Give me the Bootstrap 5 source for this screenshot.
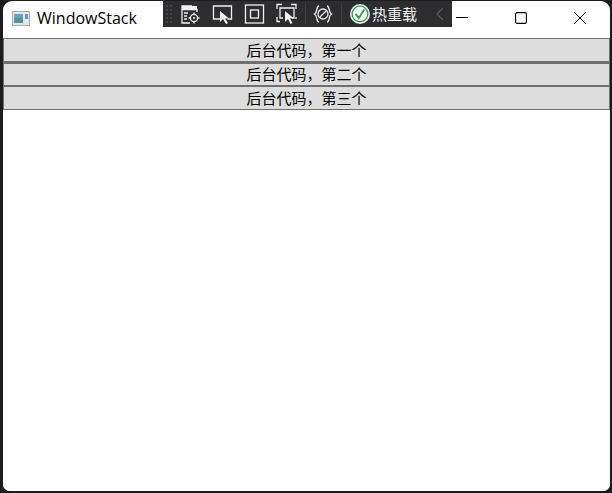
<!DOCTYPE html>
<html lang="zh">
<head>
<meta charset="utf-8">
<title>WindowStack</title>
<link href="https://cdn.jsdelivr.net/npm/bootstrap@5.3.0/dist/css/bootstrap.min.css" rel="stylesheet">
<style>
html,body{height:100%;margin:0;overflow:hidden;background:#1c1c1c}
body{padding:1px 2px 2px 3px;font-family:"Liberation Sans","Noto Sans CJK SC",sans-serif}
.win-frame{height:100%;background:#fff;border-radius:9px 9px 7px 7px;position:relative;overflow:hidden}
.win-title{height:37px;padding-left:9px}
.app-icon{width:18px;height:15px;margin-right:7px;margin-top:-2px}
.title-text{font:16px "Open Sans","Liberation Sans",sans-serif;color:#000;margin-top:-3px}
.ctrl-btn{width:59px;height:37px;margin-top:-3px}
.ctrl-row{margin-right:1px}
.dbg-bar{position:absolute;left:160px;top:0;width:289px;height:26px;background:#2d2d30;color:#f1f1f1;padding-left:2px}
.dbg-grip{width:8px;height:20px;margin-right:6px;background-image:radial-gradient(#434347 1px,transparent 1px);background-size:4px 4px}
.dbg-ic{width:22px;height:22px;flex:none}
.gap-first{margin-left:11px}
.gap-ic{margin-left:10px}
.gap-a{margin-left:6px}
.gap-b{margin-left:7px}
.dbg-sep{width:1px;height:20px;background:#3f3f46;flex:none}
.reload-text{font:15px "Noto Sans CJK SC",sans-serif;color:#f1f1f1;line-height:20px;margin-left:1px}
.stack-btn{display:block;width:100%;height:24px;padding:0 0 2px;border:1px solid #707070;border-radius:0;background:#ddd;color:#000;font:15px/19px "Noto Sans CJK SC",sans-serif;text-align:center}
.stack-btn+.stack-btn{border-top-width:2px;line-height:17px}
.stack-btn:last-child{border-top-width:1px;line-height:19px}
</style>
</head>
<body>
<div class="win-frame d-flex flex-column">
  <div class="win-title d-flex align-items-center">
    <svg class="app-icon" viewBox="0 0 18 15"><rect x=".5" y=".5" width="17" height="14" fill="#e4e8ec" stroke="#a9adb2"/><rect x="2" y="3" width="9" height="9" fill="#4d9a8c"/><rect x="2" y="3" width="9" height="4" fill="#6f9fc0"/><rect x="13" y="3" width="3" height="5" fill="#5f96c4"/></svg>
    <span class="title-text">WindowStack</span>
    <div class="flex-grow-1"></div>
    <div class="d-flex ctrl-row">
      <div class="ctrl-btn d-flex align-items-center justify-content-center"><svg width="12" height="12" viewBox="0 0 12 12"><path d="M0 5.500h12" stroke="#000" stroke-width="1"/></svg></div>
      <div class="ctrl-btn d-flex align-items-center justify-content-center"><svg width="12" height="12" viewBox="0 0 12 12"><rect x=".6" y=".6" width="10.800" height="10.800" rx="1.500" fill="none" stroke="#000" stroke-width="1.100"/></svg></div>
      <div class="ctrl-btn d-flex align-items-center justify-content-center"><svg width="12" height="12" viewBox="0 0 12 12"><path d="M0 0l12 12M12 0L0 12" stroke="#000" stroke-width="1"/></svg></div>
    </div>
  </div>
  <div class="dbg-bar d-flex align-items-center">
    <div class="dbg-grip"></div>
    <svg class="dbg-ic" viewBox="0 0 22 22" fill="none" stroke="#f1f1f1" stroke-width="1.300"><path d="M13 3H3v17h8M3 6.500h15V9" /><path d="M3 3h15v3.500H3z" fill="#f1f1f1" stroke="none"/><path d="M5 10h4M5 13h3M5 16h3"/><circle cx="15" cy="15" r="3.600"/><circle cx="15" cy="15" r="1" fill="#f1f1f1" stroke="none"/><path d="M15 9.500v2M15 18.500v2M9.500 15h2M18.500 15h2"/></svg>
    <svg class="dbg-ic gap-first" viewBox="0 0 22 22" fill="none" stroke="#f1f1f1" stroke-width="1.300"><path d="M8 16H1.500V3h18v13h-4"/><path d="M8 8v11l3-3 3 5 2-1-3-4.500h4z" fill="#f1f1f1" stroke="none"/></svg>
    <svg class="dbg-ic gap-ic" viewBox="0 0 22 22" fill="none" stroke="#f1f1f1" stroke-width="1.300"><rect x="1.500" y="2" width="18" height="18"/><rect x="6.500" y="7" width="8" height="8"/></svg>
    <svg class="dbg-ic gap-ic" viewBox="0 0 22 22" fill="none" stroke="#f1f1f1" stroke-width="1.300"><path d="M1 6V1.500h5M15 1.500h5V6M1 14v4.500h3M20 14v2"/><path d="M7 15H4V5h14v10h-2"/><path d="M9 8v11l3-3 2.500 5 2-1-2.500-4.500h4z" fill="#f1f1f1" stroke="none"/></svg>
    <div class="dbg-sep gap-b"></div>
    <svg class="dbg-ic gap-a" viewBox="0 0 22 22" fill="none" stroke="#f1f1f1" stroke-width="1.300"><path d="M7 3C4 3 6 9 2.500 11 6 13 4 19 7 19M15 3c3 0 1 6 4.500 8-3.500 2-1.500 8-4.500 8"/><circle cx="11" cy="11" r="5"/><path d="M8 14l6-6"/></svg>
    <div class="dbg-sep gap-b"></div>
    <svg class="dbg-ic gap-b" viewBox="0 0 22 22"><circle cx="11" cy="11" r="10" fill="#e8f3ea"/><circle cx="11" cy="11" r="8.500" fill="#3f9b52"/><circle cx="11" cy="11" r="7.200" fill="#fff"/><path d="M6.500 11l3.300 4 5.500-8.500" fill="none" stroke="#3f9b52" stroke-width="2"/></svg>
    <span class="reload-text">热重载</span>
    <svg class="ms-auto" width="10" height="14" viewBox="0 0 10 14" style="margin-right:7px"><path d="M8 1L2 7l6 6" fill="none" stroke="#5a5a5e" stroke-width="1.300"/></svg>
  </div>
  <div class="flex-grow-1 bg-white">
    <button class="stack-btn" type="button">后台代码，第一个</button>
    <button class="stack-btn" type="button">后台代码，第二个</button>
    <button class="stack-btn" type="button">后台代码，第三个</button>
  </div>
</div>
<script src="https://cdn.jsdelivr.net/npm/bootstrap@5.3.0/dist/js/bootstrap.bundle.min.js"></script>
</body>
</html>
